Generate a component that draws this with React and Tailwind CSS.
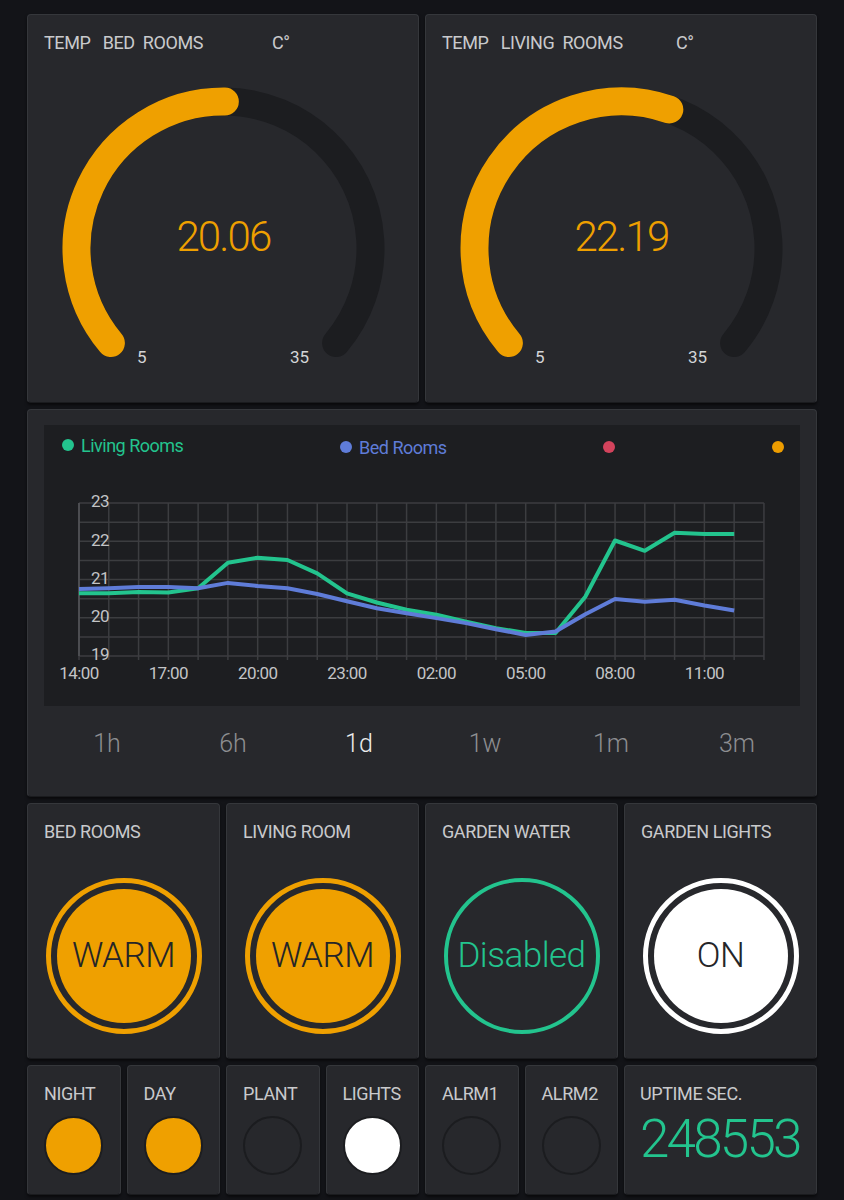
import React from 'react';

const ORANGE = '#efa000';
const GREEN = '#23c48e';
const BLUE = '#5f7cd8';

const cardClass =
  'rounded-[4px] border border-[#35373b] border-b-[#1a1b1e] bg-[#27282c] shadow-[0_2px_3px_rgba(0,0,0,0.55)]';

const labelClass = 'h-[22px] text-[18px] leading-[22px] tracking-[-0.4px] text-[#c9cacc]';

const living = [
  20.64, 20.64, 20.67, 20.66, 20.77, 21.44, 21.57, 21.51, 21.16, 20.64, 20.4, 20.21, 20.08, 19.9, 19.73, 19.6, 19.6,
  20.55, 22.02, 21.75, 22.22, 22.19, 22.19,
];
const bed = [
  20.75, 20.77, 20.8, 20.8, 20.77, 20.91, 20.83, 20.77, 20.62, 20.43, 20.25, 20.12, 19.99, 19.86, 19.7, 19.55, 19.64,
  20.09, 20.49, 20.42, 20.47, 20.32, 20.19,
];

function Gauge({ title, unitWidth, value }) {
  const cx = 179.5;
  const cy = 194.5;
  const r = 147;
  const start = 140;
  const sweep = 260;
  const frac = (value - 5) / 30;

  const point = (angle) => {
    const rad = (angle * Math.PI) / 180;
    return [cx + r * Math.cos(rad), cy + r * Math.sin(rad)];
  };

  const [sx, sy] = point(start);
  const [ex, ey] = point(start + sweep);
  const [vx, vy] = point(start + sweep * frac);
  const valueLarge = sweep * frac > 180 ? 1 : 0;

  return (
    <div className={`${cardClass} h-[389px] px-[16px] pt-[17px]`}>
      <div className={`flex items-center ${labelClass}`}>
        <span className="whitespace-pre" style={{ width: unitWidth }}>
          {title}
        </span>
        <span>C°</span>
      </div>
      <svg width="359" height="330" className="block">
        <path
          d={`M ${sx} ${sy} A ${r} ${r} 0 1 1 ${ex} ${ey}`}
          fill="none"
          stroke="#1c1d20"
          strokeWidth="28"
          strokeLinecap="round"
        />
        <path
          d={`M ${sx} ${sy} A ${r} ${r} 0 ${valueLarge} 1 ${vx} ${vy}`}
          fill="none"
          stroke={ORANGE}
          strokeWidth="28"
          strokeLinecap="round"
        />
        <text
          x={cx}
          y={cy - 9}
          textAnchor="middle"
          dominantBaseline="middle"
          fontSize="42"
          fontWeight="300"
          letterSpacing="-1.8"
          fill={ORANGE}
        >
          {value.toFixed(2)}
        </text>
        <text x="93" y="309" fontSize="17" fill="#d4d5d7">
          5
        </text>
        <text x="246" y="309" fontSize="17" fill="#d4d5d7">
          35
        </text>
      </svg>
    </div>
  );
}

function Chart() {
  const left = 35;
  const top = 48;
  const hourW = 29.78;
  const unitH = 38.25;
  const toX = (h) => left + h * hourW;
  const toY = (v) => top + (23 - v) * unitH;
  const line = (data) => data.map((v, i) => `${i === 0 ? 'M' : 'L'} ${toX(i).toFixed(1)} ${toY(v).toFixed(1)}`).join(' ');
  const right = toX(23);
  const bottom = toY(19);
  const times = ['14:00', '17:00', '20:00', '23:00', '02:00', '05:00', '08:00', '11:00'];

  return (
    <div className="h-[281px] bg-[#1d1e21]">
      <div className="flex h-[38px] items-center pl-[18px] pt-[2px] text-[18px] tracking-[-0.5px]">
        <div className="flex w-[278px] items-center gap-[7px]" style={{ color: GREEN }}>
          <span className="h-[12px] w-[12px] rounded-full bg-[#23c48e]" />
          <span>Living Rooms</span>
        </div>
        <div className="flex w-[263px] items-center gap-[7px] pt-[4px]" style={{ color: BLUE }}>
          <span className="h-[12px] w-[12px] rounded-full bg-[#5f7cd8]" />
          <span>Bed Rooms</span>
        </div>
        <div className="w-[169px] pt-[4px]">
          <span className="block h-[12px] w-[12px] rounded-full bg-[#d3435c]" />
        </div>
        <div className="pt-[4px]">
          <span className="block h-[12px] w-[12px] rounded-full bg-[#ed9d00]" />
        </div>
      </div>
      <svg width="756" height="243" className="-mt-[8px] block">
        {Array.from({ length: 24 }, (_, i) => (
          <line key={`v${i}`} x1={toX(i)} y1={top} x2={toX(i)} y2={bottom + 4} stroke="#3c3d40" strokeWidth="1.5" />
        ))}
        {Array.from({ length: 9 }, (_, i) => (
          <line
            key={`h${i}`}
            x1={left}
            y1={top + i * unitH * 0.5}
            x2={right}
            y2={top + i * unitH * 0.5}
            stroke="#3c3d40"
            strokeWidth="1.5"
          />
        ))}
        <line x1={left} y1={top} x2={left} y2={bottom} stroke="#55565a" strokeWidth="1.5" />
        <path d={line(living)} fill="none" stroke={GREEN} strokeWidth="4" strokeLinejoin="round" />
        <path d={line(bed)} fill="none" stroke={BLUE} strokeWidth="4" strokeLinejoin="round" />
        {[23, 22, 21, 20, 19].map((v) => (
          <text key={v} x={left + 12} y={toY(v)} dominantBaseline="middle" fontSize="17" letterSpacing="-0.5" fill="#c3c4c6">
            {v}
          </text>
        ))}
        {times.map((t, i) => (
          <text
            key={t}
            x={toX(i * 3)}
            y={bottom + 19}
            textAnchor="middle"
            dominantBaseline="middle"
            fontSize="17"
            letterSpacing="-0.6"
            fill="#c3c4c6"
          >
            {t}
          </text>
        ))}
      </svg>
    </div>
  );
}

function RoundButton({ label, text, variant }) {
  let circle;
  if (variant === 'outline') {
    circle = (
      <div className="flex h-[156px] w-[156px] items-center justify-center rounded-full border-[4px] border-[#23c48e] text-[35px] font-light tracking-[-0.5px] text-[#23c48e]">
        {text}
      </div>
    );
  } else {
    const ring = variant === 'white' ? 'border-white' : 'border-[#efa000]';
    const fill = variant === 'white' ? 'bg-white' : 'bg-[#efa000]';
    circle = (
      <div className={`h-[156px] w-[156px] rounded-full border-[5px] p-[6px] ${ring}`}>
        <div
          className={`flex h-full w-full items-center justify-center rounded-full text-[35px] font-light tracking-[-0.5px] text-[#242528] ${fill}`}
        >
          {text}
        </div>
      </div>
    );
  }

  return (
    <div className={`${cardClass} flex h-[256px] flex-col px-[16px] pt-[17px]`}>
      <div className={labelClass}>{label}</div>
      <div className="mt-[35px] flex justify-center">{circle}</div>
    </div>
  );
}

function Led({ label, state }) {
  const look =
    state === 'orange'
      ? 'bg-[#efa000] border-[#1c1d20]'
      : state === 'white'
        ? 'bg-white border-[#1c1d20]'
        : 'bg-[#27282c] border-[#1b1c1f]';

  return (
    <div className={`${cardClass} flex h-[130px] flex-col px-[16px] pt-[17px]`}>
      <div className={labelClass}>{label}</div>
      <div className="mt-[11px] flex justify-center">
        <span className={`block h-[59px] w-[59px] rounded-full border-[2px] ${look}`} />
      </div>
    </div>
  );
}

export default function App() {
  return (
    <div className="flex min-h-[1200px] flex-col gap-[6px] bg-[#131418] px-[27px] pt-[14px] font-['Roboto',sans-serif]">
      <div className="grid grid-cols-2 gap-[6px]">
        <Gauge title="TEMP   BED  ROOMS" unitWidth={228} value={20.06} />
        <Gauge title="TEMP   LIVING  ROOMS" unitWidth={234} value={22.19} />
      </div>

      <div className={`${cardClass} h-[388px] px-[16px] pt-[15px]`}>
        <Chart />
        <div className="grid h-[76px] grid-cols-6 items-center text-center text-[25px] font-light text-[#8d8e91]">
          <span>1h</span>
          <span>6h</span>
          <span className="text-[#ececec]">1d</span>
          <span>1w</span>
          <span>1m</span>
          <span>3m</span>
        </div>
      </div>

      <div className="grid grid-cols-4 gap-[6px]">
        <RoundButton label="BED ROOMS" text="WARM" variant="orange" />
        <RoundButton label="LIVING ROOM" text="WARM" variant="orange" />
        <RoundButton label="GARDEN WATER" text="Disabled" variant="outline" />
        <RoundButton label="GARDEN LIGHTS" text="ON" variant="white" />
      </div>

      <div className="grid grid-cols-4 gap-[6px]">
        <div className="grid grid-cols-2 gap-[6px]">
          <Led label="NIGHT" state="orange" />
          <Led label="DAY" state="orange" />
        </div>
        <div className="grid grid-cols-2 gap-[6px]">
          <Led label="PLANT" state="off" />
          <Led label="LIGHTS" state="white" />
        </div>
        <div className="grid grid-cols-2 gap-[6px]">
          <Led label="ALRM1" state="off" />
          <Led label="ALRM2" state="off" />
        </div>
        <div className={`${cardClass} flex h-[130px] flex-col px-[15px] pt-[17px]`}>
          <div className={labelClass}>UPTIME SEC.</div>
          <div className="mt-[6px] text-[53px] font-light leading-[56px] tracking-[-2.8px] text-[#23c48e]">248553</div>
        </div>
      </div>
    </div>
  );
}
